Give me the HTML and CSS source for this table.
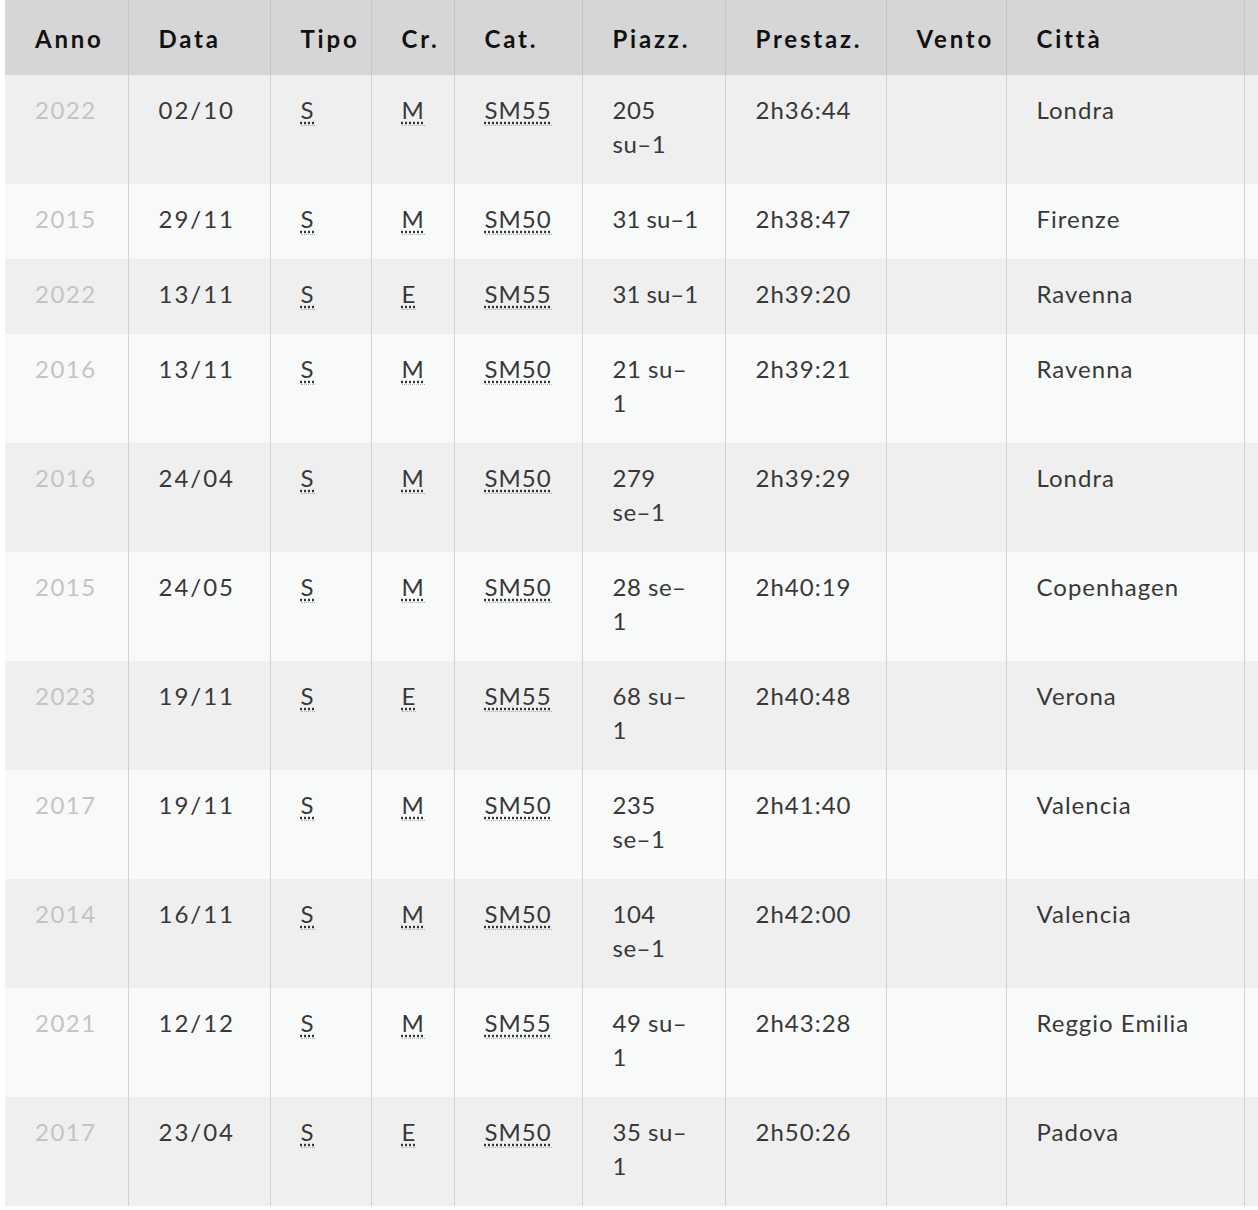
FILE: index.html
```html
<!DOCTYPE html>
<html lang="it">
<head>
<meta charset="utf-8">
<title>Risultati</title>
<link rel="stylesheet" href="styles.css">
</head>
<body>
<div class="wrap">
<table class="results">
  <colgroup>
    <col class="c-anno"><col class="c-data"><col class="c-tipo"><col class="c-cr"><col class="c-cat"><col class="c-piazz"><col class="c-prest"><col class="c-vento"><col class="c-citta"><col class="c-extra">
  </colgroup>
  <thead>
    <tr><th>Anno</th><th>Data</th><th>Tipo</th><th>Cr.</th><th>Cat.</th><th>Piazz.</th><th>Prestaz.</th><th>Vento</th><th>Città</th><th></th></tr>
  </thead>
  <tbody>
    <tr><td class="year">2022</td><td class="date">02/10</td><td><abbr title="Strada">S</abbr></td><td><abbr title="Maratona">M</abbr></td><td><abbr title="Senior Master 55">SM55</abbr></td><td class="place">205 su–1</td><td>2h36:44</td><td></td><td>Londra</td><td></td></tr>
    <tr><td class="year">2015</td><td class="date">29/11</td><td><abbr title="Strada">S</abbr></td><td><abbr title="Maratona">M</abbr></td><td><abbr title="Senior Master 50">SM50</abbr></td><td class="place nowrap">31 su–1</td><td>2h38:47</td><td></td><td>Firenze</td><td></td></tr>
    <tr><td class="year">2022</td><td class="date">13/11</td><td><abbr title="Strada">S</abbr></td><td><abbr title="Evento">E</abbr></td><td><abbr title="Senior Master 55">SM55</abbr></td><td class="place nowrap">31 su–1</td><td>2h39:20</td><td></td><td>Ravenna</td><td></td></tr>
    <tr><td class="year">2016</td><td class="date">13/11</td><td><abbr title="Strada">S</abbr></td><td><abbr title="Maratona">M</abbr></td><td><abbr title="Senior Master 50">SM50</abbr></td><td class="place">21 su–1</td><td>2h39:21</td><td></td><td>Ravenna</td><td></td></tr>
    <tr><td class="year">2016</td><td class="date">24/04</td><td><abbr title="Strada">S</abbr></td><td><abbr title="Maratona">M</abbr></td><td><abbr title="Senior Master 50">SM50</abbr></td><td class="place">279 se–1</td><td>2h39:29</td><td></td><td>Londra</td><td></td></tr>
    <tr><td class="year">2015</td><td class="date">24/05</td><td><abbr title="Strada">S</abbr></td><td><abbr title="Maratona">M</abbr></td><td><abbr title="Senior Master 50">SM50</abbr></td><td class="place">28 se–1</td><td>2h40:19</td><td></td><td>Copenhagen</td><td></td></tr>
    <tr><td class="year">2023</td><td class="date">19/11</td><td><abbr title="Strada">S</abbr></td><td><abbr title="Evento">E</abbr></td><td><abbr title="Senior Master 55">SM55</abbr></td><td class="place">68 su–1</td><td>2h40:48</td><td></td><td>Verona</td><td></td></tr>
    <tr><td class="year">2017</td><td class="date">19/11</td><td><abbr title="Strada">S</abbr></td><td><abbr title="Maratona">M</abbr></td><td><abbr title="Senior Master 50">SM50</abbr></td><td class="place">235 se–1</td><td>2h41:40</td><td></td><td>Valencia</td><td></td></tr>
    <tr><td class="year">2014</td><td class="date">16/11</td><td><abbr title="Strada">S</abbr></td><td><abbr title="Maratona">M</abbr></td><td><abbr title="Senior Master 50">SM50</abbr></td><td class="place">104 se–1</td><td>2h42:00</td><td></td><td>Valencia</td><td></td></tr>
    <tr><td class="year">2021</td><td class="date">12/12</td><td><abbr title="Strada">S</abbr></td><td><abbr title="Maratona">M</abbr></td><td><abbr title="Senior Master 55">SM55</abbr></td><td class="place">49 su–1</td><td>2h43:28</td><td></td><td>Reggio Emilia</td><td></td></tr>
    <tr><td class="year">2017</td><td class="date">23/04</td><td><abbr title="Strada">S</abbr></td><td><abbr title="Evento">E</abbr></td><td><abbr title="Senior Master 50">SM50</abbr></td><td class="place">35 su–1</td><td>2h50:26</td><td></td><td>Padova</td><td></td></tr>
  </tbody>
</table>
</div>
</body>
</html>
```
FILE: styles.css
```css
html, body {
  margin: 0;
  padding: 0;
  background: #ffffff;
  overflow: hidden;
}
.wrap {
  padding-left: 5px;
  width: 1400px;
}
.results {
  table-layout: fixed;
  border-collapse: collapse;
  width: 1339px;
  font-family: Lato, "Open Sans", sans-serif;
  font-size: 24px;
  line-height: 34px;
  color: #383838;
}
.c-anno { width: 123px; }
.c-data { width: 142px; }
.c-tipo { width: 101px; }
.c-cr { width: 83px; }
.c-cat { width: 128px; }
.c-piazz { width: 143px; }
.c-prest { width: 161px; }
.c-vento { width: 120px; }
.c-citta { width: 238px; }
.c-extra { width: 100px; }
.results th,
.results td {
  text-align: left;
  vertical-align: top;
  padding: 18px 30px 23px 30px;
  border-right: 1px solid #d2d2d2;
}
.results thead tr {
  background: #d6d6d6;
}
.results th {
  font-weight: 700;
  color: #111111;
  letter-spacing: 2.8px;
  padding-top: 22px;
  padding-bottom: 19px;
  border-right-color: #c6c6c6;
}
.results tbody tr:nth-child(odd) {
  background: #efefef;
}
.results tbody tr:nth-child(even) {
  background: #f8f9f9;
}
.results td {
  letter-spacing: 1px;
}
.results td.year {
  color: #c4c4c4;
  letter-spacing: 1.5px;
}
.results td.date {
  letter-spacing: 2px;
}
.results td.place {
  letter-spacing: 0.5px;
}
.results td.nowrap {
  white-space: nowrap;
  letter-spacing: 0;
}
.results abbr {
  text-decoration: underline dotted #333333;
  text-underline-offset: 3px;
  border-bottom: 1px dotted #b0b0b0;
  padding-bottom: 1px;
}
```
